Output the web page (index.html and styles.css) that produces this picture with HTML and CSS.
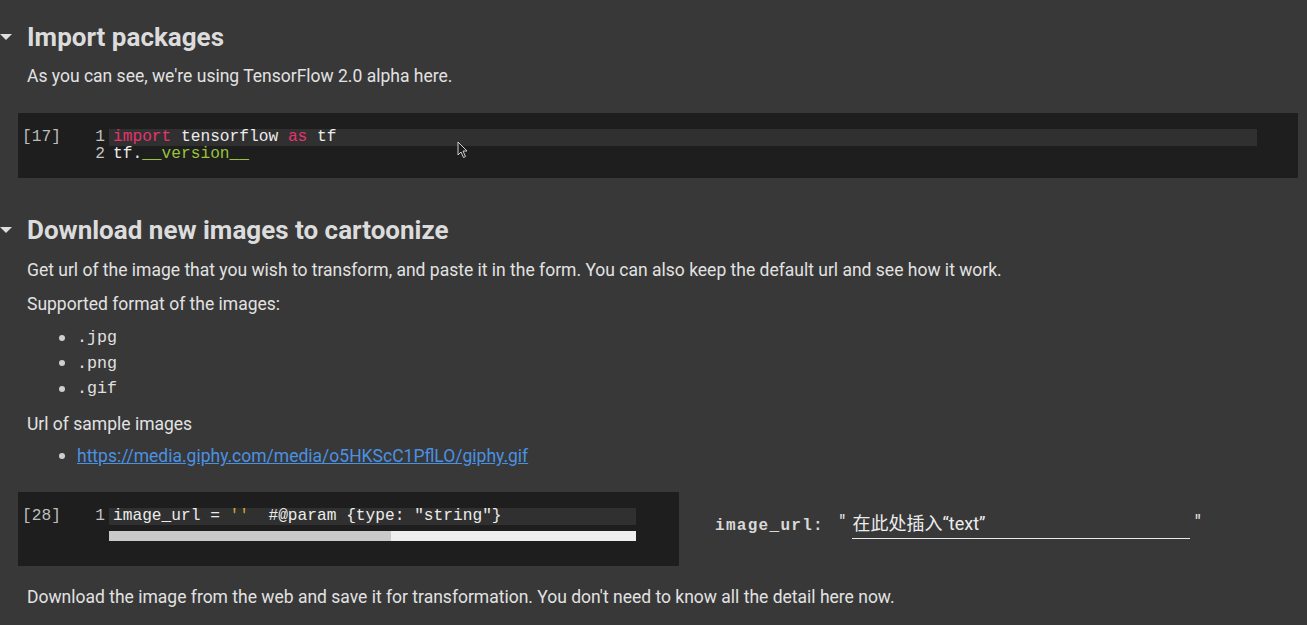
FILE: index.html
```html
<!DOCTYPE html>
<html lang="en">
<head>
<meta charset="utf-8">
<title>Notebook</title>
<link rel="stylesheet" href="styles.css">
</head>
<body>
<main class="notebook">
  <div class="section-head first">
    <span class="caret"></span>
    <h2>Import packages</h2>
  </div>
  <p class="text p-intro">As you can see, we're using TensorFlow 2.0 alpha here.</p>

  <div class="cell cell-wide">
    <div class="prompt">[17]</div>
    <div class="gutter"><div>1</div><div>2</div></div>
    <div class="code">
      <div class="line active"><span class="kw">import</span> tensorflow <span class="kw">as</span> tf</div>
      <div class="line">tf.<span class="attr">__version__</span></div>
    </div>
    <svg class="cursor" width="12" height="18" viewBox="0 0 12 18"><path d="M1 1 L1 14 L4 11 L6.5 16.5 L8.5 15.6 L6 10 L10 10 Z" fill="#1c1c1c" stroke="#cfcfcf" stroke-width="1"/></svg>
  </div>

  <div class="section-head second">
    <span class="caret"></span>
    <h2>Download new images to cartoonize</h2>
  </div>
  <p class="text p-get">Get url of the image that you wish to transform, and paste it in the form. You can also keep the default url and see how it work.</p>
  <p class="text p-sup">Supported format of the images:</p>
  <ul class="bullets mono-list">
    <li>.jpg</li>
    <li>.png</li>
    <li>.gif</li>
  </ul>
  <p class="text p-url">Url of sample images</p>
  <ul class="bullets link-list">
    <li><a href="#">https://media.giphy.com/media/o5HKScC1PflLO/giphy.gif</a></li>
  </ul>

  <div class="form-row">
    <div class="cell cell-narrow">
      <div class="prompt">[28]</div>
      <div class="gutter"><div>1</div></div>
      <div class="code">
        <div class="line active">image_url = <span class="str">''</span>  #@param {type: "string"}</div>
        <div class="bar"><span class="bar-fill"></span></div>
      </div>
    </div>
    <div class="form">
      <span class="form-label">image_url:</span>
      <span class="quote">"</span>
      <span class="input">在此处插入“text”</span>
      <span class="quote">"</span>
    </div>
  </div>

  <p class="text p-last">Download the image from the web and save it for transformation. You don't need to know all the detail here now.</p>
</main>
</body>
</html>
```

FILE: styles.css
```css
html, body {
  margin: 0;
  padding: 0;
}
body {
  background: #383838;
  color: #e2e2e2;
  font-family: Roboto, "Noto Sans", sans-serif;
  overflow: hidden;
}
.notebook {
  display: flex;
  flex-direction: column;
  align-items: flex-start;
}
.section-head {
  display: flex;
  align-items: center;
  height: 32px;
}
.section-head.first { margin-top: 21px; }
.section-head.second { margin-top: 36px; }
.caret {
  width: 0;
  height: 0;
  border-left: 6px solid transparent;
  border-right: 6px solid transparent;
  border-top: 6px solid #dedede;
  margin-right: 15px;
}
h2 {
  margin: 0;
  font-size: 26px;
  line-height: 32px;
  font-weight: 700;
  color: #dcdcdc;
}
.text {
  margin: 0 0 0 27px;
  font-size: 17.5px;
  line-height: 24px;
  color: #e2e2e2;
}
.p-intro { margin-top: 11px; }
.p-get { margin-top: 12px; }
.p-sup { margin-top: 10px; }
.p-url { margin-top: 10px; }
.p-last { margin-top: 19px; }

.cell {
  position: relative;
  display: flex;
  background: #1e1e1e;
  margin-left: 18px;
  font-family: "Liberation Mono", "DejaVu Sans Mono", monospace;
  font-size: 16.2px;
  line-height: 17px;
  color: #ececec;
}
.cell-wide {
  width: 1280px;
  margin-top: 25px;
  padding: 16px 0 15px;
}
.cell-narrow {
  width: 661px;
  padding: 16px 0 25px;
}
.prompt {
  width: 66px;
  padding-left: 4px;
  color: #bdbdbd;
  flex: none;
}
.gutter {
  width: 17px;
  padding-right: 4px;
  text-align: right;
  color: #c4c4c4;
  flex: none;
}
.code {
  flex: 1;
  margin-right: 41px;
}
.cell-narrow .code { margin-right: 43px; }
.line {
  padding-left: 4px;
  white-space: pre;
  height: 17px;
}
.line.active { background: #303030; }
.kw { color: #e7336f; }
.attr { color: #98c33c; }
.str { color: #cfa82c; }
.bar {
  margin-top: 6px;
  height: 10px;
  background: #eeeeee;
  display: flex;
}
.bar-fill {
  width: 282px;
  background: #c9c9c9;
}
.cursor {
  position: absolute;
  left: 439px;
  top: 28px;
}

.bullets {
  margin: 0;
  padding: 0;
  list-style: none;
}
.bullets li {
  display: flex;
  align-items: center;
  height: 25.5px;
}
.bullets li::before {
  content: "";
  width: 6px;
  height: 6px;
  border-radius: 50%;
  background: #cfcfcf;
  margin-left: 59px;
  margin-right: 12px;
  flex: none;
}
.mono-list {
  margin-top: 9px;
  font-family: "Liberation Mono", monospace;
  font-size: 16.7px;
  color: #e0e0e0;
}
.link-list {
  margin-top: 8px;
  font-size: 17.5px;
}
.link-list a {
  color: #4b91e2;
  text-decoration: underline;
}

.form-row {
  display: flex;
  align-items: flex-start;
  margin-top: 23px;
}
.form {
  display: flex;
  align-items: flex-start;
  margin-left: 36px;
  margin-top: 19px;
}
.form-label {
  font-family: "Liberation Mono", monospace;
  font-weight: 700;
  font-size: 16px;
  letter-spacing: 1.3px;
  line-height: 20px;
  margin-top: 5px;
  color: #d8d8d8;
  margin-right: 15px;
}
.quote {
  font-family: Roboto, sans-serif;
  font-size: 20px;
  line-height: 20px;
  color: #e6e6e6;
  margin-top: 1px;
}
.input {
  width: 338px;
  margin: 1px 4px 0 7px;
  font-family: Roboto, "Noto Sans CJK SC", sans-serif;
  font-size: 18px;
  line-height: 24px;
  padding-bottom: 2px;
  border-bottom: 1px solid #e8e8e8;
  color: #ececec;
}
```
